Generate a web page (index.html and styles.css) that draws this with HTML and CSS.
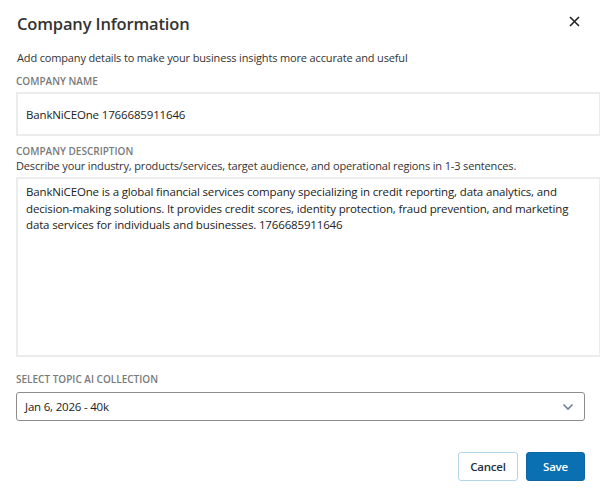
FILE: index.html
```html
<!DOCTYPE html>
<html lang="en">
<head>
<meta charset="utf-8">
<link rel="stylesheet" href="styles.css">
</head>
<body>
<div class="dialog">
  <div class="header">
    <h1 class="title">Company Information</h1>
    <button class="close" aria-label="Close">
      <svg width="11" height="11" viewBox="0 0 11 11"><path d="M1 1L10 10M10 1L1 10" stroke="#222" stroke-width="1.6" fill="none"/></svg>
    </button>
  </div>
  <p class="subtitle">Add company details to make your business insights more accurate and useful</p>

  <div class="field">
    <div class="label">COMPANY NAME</div>
    <div class="input">BankNiCEOne 1766685911646</div>
  </div>

  <div class="field">
    <div class="label">COMPANY DESCRIPTION</div>
    <div class="help">Describe your industry, products/services, target audience, and operational regions in 1-3 sentences.</div>
    <div class="textarea">BankNiCEOne is a global financial services company specializing in credit reporting, data analytics, and decision-making solutions. It provides credit scores, identity protection, fraud prevention, and marketing data services for individuals and businesses. 1766685911646</div>
  </div>

  <div class="field select-field">
    <div class="label">SELECT TOPIC AI COLLECTION</div>
    <div class="select">
      <span>Jan 6, 2026 - 40k</span>
      <svg width="12" height="8" viewBox="0 0 12 8"><path d="M1.5 1.5L6 6L10.5 1.5" stroke="#6d7f91" stroke-width="1.6" fill="none"/></svg>
    </div>
  </div>

  <div class="actions">
    <button class="btn cancel">Cancel</button>
    <button class="btn save">Save</button>
  </div>
</div>
</body>
</html>
```

FILE: styles.css
```css
html, body {
  margin: 0;
  padding: 0;
  background: #fff;
}
body {
  font-family: "Open Sans", "Noto Sans", sans-serif;
  color: #333;
  width: 600px;
  overflow: hidden;
}
.dialog {
  padding: 0 15px 0 16px;
}
.header {
  display: flex;
  justify-content: space-between;
  align-items: center;
  height: 46px;
}
.title {
  margin: 0;
  font-size: 16.5px;
  font-weight: 600;
  color: #333;
  letter-spacing: -0.15px;
  padding-left: 1px;
}
.close {
  border: 0;
  background: none;
  padding: 0;
  width: 16px;
  height: 16px;
  display: flex;
  align-items: center;
  justify-content: center;
  margin-right: 3px;
  margin-top: -4px;
}
.subtitle {
  margin: 4px 0 0 1px;
  font-size: 11px;
  letter-spacing: -0.15px;
  color: #333;
  line-height: 16px;
}
.field {
  margin-top: 8px;
}
.label {
  font-size: 10px;
  font-weight: 600;
  color: #7a7a7a;
  line-height: 14px;
  letter-spacing: 0;
}
.input {
  margin-top: 4px;
  margin-right: -15px;
  height: 44px;
  box-sizing: border-box;
  border: 2px solid #ececec;
  border-right-width: 1px;
  padding: 0 8px;
  display: flex;
  align-items: center;
  font-size: 11.5px;
  letter-spacing: -0.15px;
  color: #222;
}
.help {
  font-size: 11px;
  letter-spacing: -0.15px;
  line-height: 15px;
  color: #333;
}
.textarea {
  margin-top: 4px;
  margin-right: -15px;
  height: 180px;
  box-sizing: border-box;
  border: 2px solid #ececec;
  border-right-width: 1px;
  padding: 5px 8px;
  font-size: 11.5px;
  letter-spacing: -0.15px;
  line-height: 16.7px;
  color: #222;
}
.select-field {
  margin-top: 15px;
}
.select {
  margin-top: 6px;
  height: 29px;
  box-sizing: border-box;
  border: 1.5px solid #8c8c8c;
  border-radius: 3px;
  display: flex;
  align-items: center;
  justify-content: space-between;
  padding: 0 10px 0 8px;
  font-size: 11.5px;
  letter-spacing: -0.2px;
  color: #222;
}
.actions {
  display: flex;
  justify-content: flex-end;
  gap: 8px;
  margin-top: 31px;
}
.btn {
  height: 29px;
  box-sizing: border-box;
  border-radius: 3px;
  font-family: "Open Sans", "Noto Sans", sans-serif;
  font-size: 11.5px;
  font-weight: 600;
  letter-spacing: -0.2px;
  padding: 0;
}
.cancel {
  width: 60px;
  background: #fff;
  border: 1.5px solid #b5d6e6;
  color: #234;
}
.save {
  width: 59px;
  background: #0a70b1;
  border: 1px solid #0a67a3;
  color: #fff;
}
```
